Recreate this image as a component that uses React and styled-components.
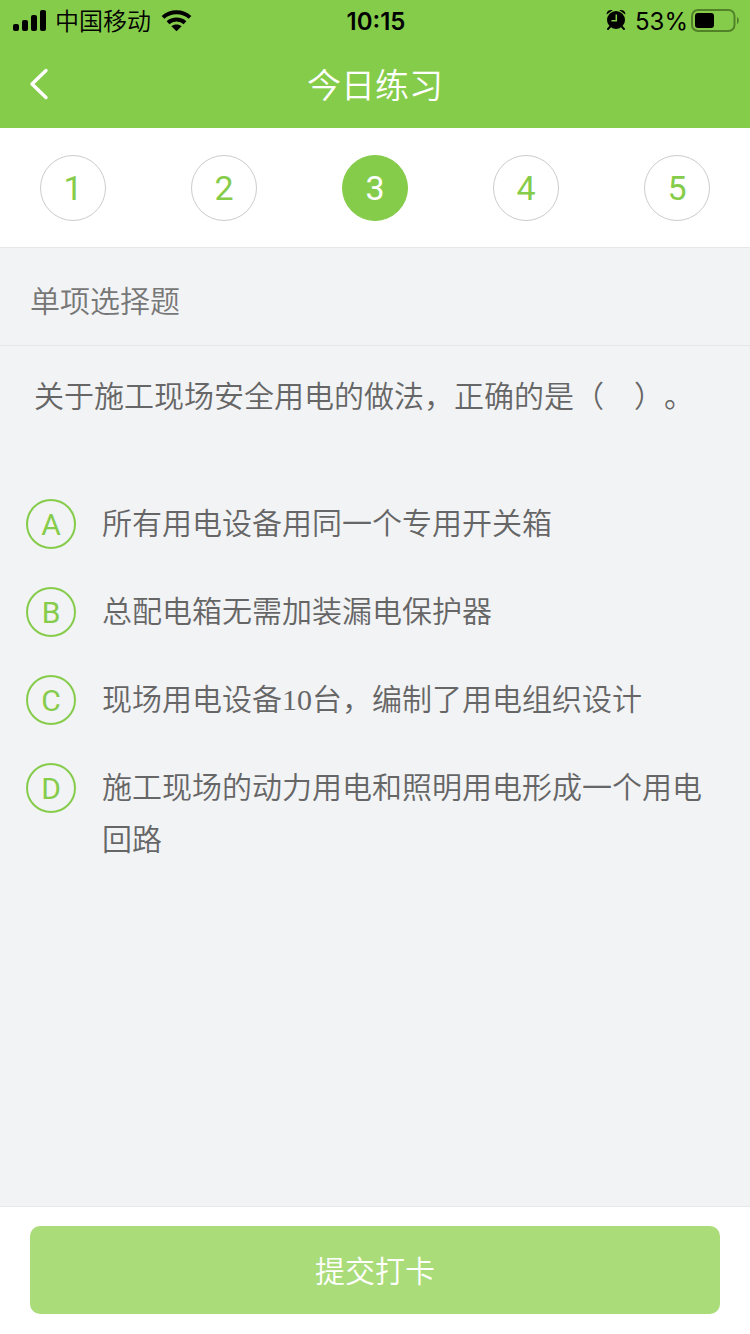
import React, { useState } from "react";
import styled, { createGlobalStyle } from "styled-components";

const GREEN = "#86cc4b";
const LINE = "#e6e7e9";

const GlobalStyle = createGlobalStyle`
  *, *::before, *::after { box-sizing: border-box; }
  body {
    margin: 0;
    background: #f2f3f5;
    color: #666;
    font-family: Inter, "Noto Sans CJK SC", sans-serif;
    text-spacing-trim: space-all;
  }
  button { font-family: inherit; cursor: pointer; }
`;

const Page = styled.div`
  min-height: 100vh;
  display: flex;
  flex-direction: column;
`;

const Header = styled.header`
  background: ${GREEN};
`;

const StatusBar = styled.div`
  display: grid;
  grid-template-columns: 1fr auto 1fr;
  align-items: center;
  height: 40px;
  padding: 0 11px 0 13px;
  color: #000;
  font-size: 24px;
  line-height: 40px;
`;

const StatusGroup = styled.div`
  display: flex;
  align-items: center;
  justify-content: ${(p) => (p.$end ? "flex-end" : "flex-start")};
  gap: 9px;
  font-weight: ${(p) => (p.$end ? 400 : 350)};
  svg { display: block; flex: none; }
`;

const StatusText = styled.span`
  padding-top: 2px;
`;

const BatteryLevel = styled.span`
  display: flex;
  align-items: center;
  gap: 3px;
`;

const Clock = styled.time`
  padding-top: 2px;
  font-weight: 600;
`;

const NavBar = styled.div`
  display: grid;
  grid-template-columns: 80px 1fr 80px;
  align-items: center;
  height: 88px;
`;

const BackButton = styled.button`
  display: flex;
  align-items: center;
  height: 88px;
  padding: 0 0 0 28px;
  border: 0;
  background: none;
  color: #fff;
`;

const Title = styled.h1`
  margin: 0;
  padding-top: 4px;
  color: #fff;
  font-size: 34px;
  font-weight: 350;
  line-height: 84px;
  text-align: center;
`;

const Steps = styled.nav`
  display: flex;
  justify-content: space-between;
  padding: 27px 40px 26px;
  background: #fff;
  border-bottom: 1px solid ${LINE};
`;

const Step = styled.button`
  width: 66px;
  height: 66px;
  padding: 0;
  border: 1px solid ${(p) => (p.$active ? GREEN : "#ccc")};
  border-radius: 50%;
  background: ${(p) => (p.$active ? GREEN : "#fff")};
  color: ${(p) => (p.$active ? "#fff" : GREEN)};
  font-family: Roboto, sans-serif;
  font-size: 34px;
  line-height: 64px;
`;

const SectionTitle = styled.h2`
  margin: 0;
  padding: 27px 30px 18px;
  border-bottom: 1px solid ${LINE};
  color: #777;
  font-size: 30px;
  font-weight: 350;
  line-height: 52px;
`;

const Question = styled.fieldset`
  flex: 1;
  min-width: 0;
  margin: 0;
  padding: 0;
  border: 0;
  font-size: 30px;
  font-weight: 350;
  line-height: 52px;
`;

const QuestionText = styled.legend`
  padding: 24px 34px 76px;
`;

const Options = styled.div`
  display: flex;
  flex-direction: column;
  gap: 36px;
  padding: 0 26px 36px;
`;

const Option = styled.label`
  display: grid;
  grid-template-columns: 50px 1fr;
  column-gap: 26px;
  cursor: pointer;
`;

const Radio = styled.input`
  grid-area: 1 / 1;
  appearance: none;
  width: 50px;
  height: 50px;
  margin: 1px 0;
  border: 2px solid ${GREEN};
  border-radius: 50%;
  cursor: pointer;
  &:checked { background: ${GREEN}; }
  &:checked + span { color: #fff; }
`;

const Letter = styled.span`
  grid-area: 1 / 1;
  height: 52px;
  padding-top: 1px;
  color: ${GREEN};
  font-family: Roboto, sans-serif;
  font-size: 30px;
  font-weight: 400;
  text-align: center;
  pointer-events: none;
`;

const OptionText = styled.span`
  grid-area: 1 / 2;
  font-family: "Liberation Serif", "Noto Sans CJK SC", serif;
`;

const Footer = styled.footer`
  padding: 19px 30px 20px;
  border-top: 1px solid ${LINE};
  background: #fff;
`;

const SubmitButton = styled.button`
  display: block;
  width: 100%;
  height: 88px;
  border: 0;
  border-radius: 10px;
  background: #aadc7a;
  color: #fff;
  font-size: 30px;
  font-weight: 350;
  line-height: 88px;
`;

const SignalIcon = () => (
  <svg width="33" height="22" viewBox="0 0 33 22" aria-hidden="true">
    <rect x="0" y="14" width="6" height="7" rx="2" />
    <rect x="9" y="10" width="6" height="11" rx="2" />
    <rect x="18" y="5" width="6" height="16" rx="2" />
    <rect x="27" y="0" width="6" height="21" rx="2" />
  </svg>
);

const WifiIcon = () => (
  <svg width="32" height="22" viewBox="0 0 32 22" aria-hidden="true">
    <g fill="none" stroke="#000" strokeWidth="4">
      <path d="M3 7.4C10.3.6 22.7.6 30 7.4" />
      <path d="M8 12.7C12.6 8.4 20.4 8.4 25 12.7" />
    </g>
    <path d="M16.5 21.2 11.4 16.3C14.3 14 18.7 14 21.6 16.3Z" />
  </svg>
);

const AlarmIcon = () => (
  <svg width="20" height="22" viewBox="0 0 20 22" aria-hidden="true">
    <path d="M.8 4.6C0 2 2.6-.4 6.6.2ZM19.2 4.6C20 2 17.4-.4 13.4.2Z" />
    <circle cx="10" cy="10" r="9" />
    <path d="M4.4 16.4 2 19M15.6 16.4 18 19" stroke="#000" strokeWidth="2" strokeLinecap="round" />
    <path d="M10.3 4.6V10.8H5.4" fill="none" stroke={GREEN} strokeWidth="1.5" />
  </svg>
);

const BatteryIcon = () => (
  <svg width="48" height="24" viewBox="0 0 48 24" aria-hidden="true">
    <rect x="1" y="1" width="42.5" height="21" rx="6" fill="none" stroke="#528228" strokeWidth="2" />
    <rect x="4" y="4" width="19" height="15" rx="3" />
    <path d="M46 8C48.4 8.9 48.4 14.1 46 15Z" fill="#528228" />
  </svg>
);

const BackIcon = () => (
  <svg width="22" height="32" viewBox="0 0 22 32" aria-hidden="true">
    <path d="M18 2.5 4 16 18 29.5" fill="none" stroke="currentColor" strokeWidth="3.4" strokeLinecap="round" strokeLinejoin="round" />
  </svg>
);

const OPTIONS = [
  ["A", "所有用电设备用同一个专用开关箱"],
  ["B", "总配电箱无需加装漏电保护器"],
  ["C", "现场用电设备10台，编制了用电组织设计"],
  ["D", "施工现场的动力用电和照明用电形成一个用电回路"],
];

export default function App() {
  const [step, setStep] = useState(3);
  const [answer, setAnswer] = useState(null);

  return (
    <Page lang="zh-CN">
      <GlobalStyle />
      <Header>
        <StatusBar>
          <StatusGroup>
            <SignalIcon />
            <StatusText>中国移动</StatusText>
            <WifiIcon />
          </StatusGroup>
          <Clock>10:15</Clock>
          <StatusGroup $end>
            <AlarmIcon />
            <BatteryLevel>
              <StatusText>53%</StatusText>
              <BatteryIcon />
            </BatteryLevel>
          </StatusGroup>
        </StatusBar>
        <NavBar>
          <BackButton type="button" aria-label="返回">
            <BackIcon />
          </BackButton>
          <Title>今日练习</Title>
        </NavBar>
      </Header>

      <Steps>
        {[1, 2, 3, 4, 5].map((n) => (
          <Step key={n} type="button" $active={n === step} onClick={() => setStep(n)}>
            {n}
          </Step>
        ))}
      </Steps>

      <SectionTitle>单项选择题</SectionTitle>

      <Question>
        <QuestionText>关于施工现场安全用电的做法，正确的是（　）。</QuestionText>
        <Options>
          {OPTIONS.map(([letter, text]) => (
            <Option key={letter}>
              <Radio
                type="radio"
                name="answer"
                value={letter}
                checked={answer === letter}
                onChange={() => setAnswer(letter)}
              />
              <Letter>{letter}</Letter>
              <OptionText>{text}</OptionText>
            </Option>
          ))}
        </Options>
      </Question>

      <Footer>
        <SubmitButton type="button">提交打卡</SubmitButton>
      </Footer>
    </Page>
  );
}
